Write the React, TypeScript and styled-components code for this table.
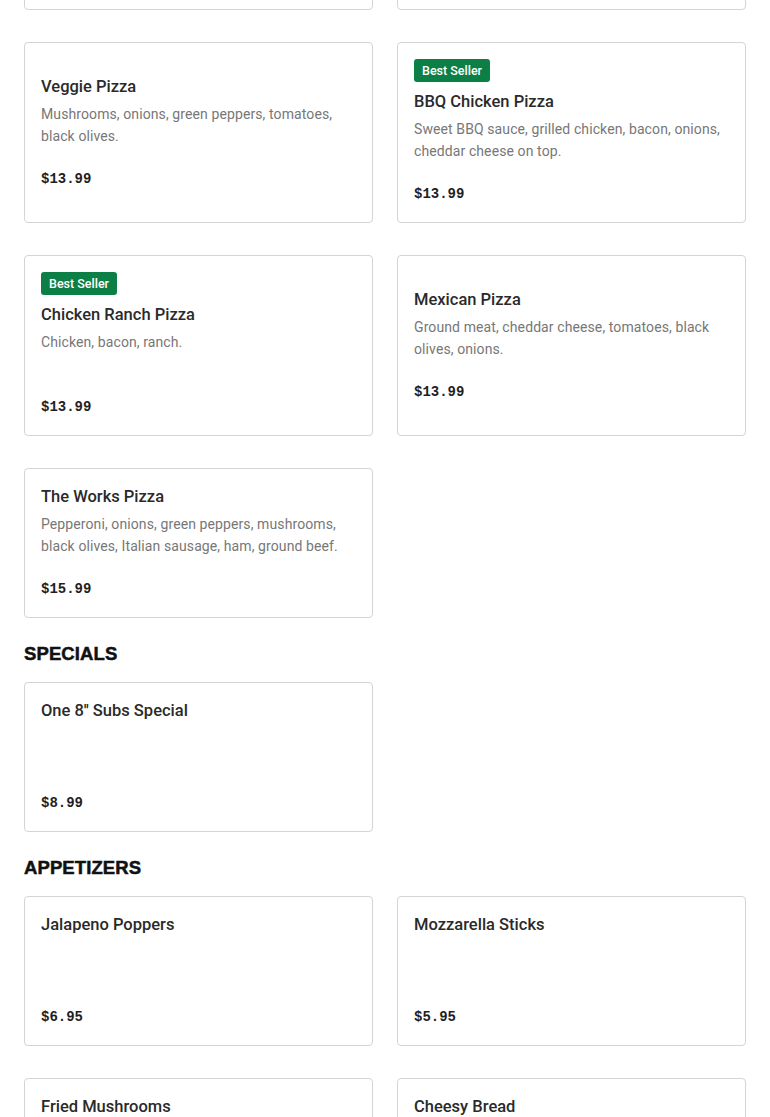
import React from "react";
import styled, { createGlobalStyle } from "styled-components";

const GlobalStyle = createGlobalStyle`
  html, body {
    margin: 0;
    padding: 0;
    background: #fff;
    overflow: hidden;
  }
  * {
    box-sizing: border-box;
  }
`;

interface Item {
  name: string;
  description?: string;
  price: string;
  bestSeller?: boolean;
}

interface Section {
  title?: string;
  items: Item[];
}

const sections: Section[] = [
  {
    items: [
      {
        name: "Cheese Pizza",
        description: "Our classic sauce with a blend of mozzarella cheese.",
        price: "$11.99",
      },
      {
        name: "Pepperoni Pizza",
        description: "Loaded with pepperoni and mozzarella cheese.",
        price: "$12.99",
      },
      {
        name: "Veggie Pizza",
        description: "Mushrooms, onions, green peppers, tomatoes, black olives.",
        price: "$13.99",
      },
      {
        name: "BBQ Chicken Pizza",
        description:
          "Sweet BBQ sauce, grilled chicken, bacon, onions, cheddar cheese on top.",
        price: "$13.99",
        bestSeller: true,
      },
      {
        name: "Chicken Ranch Pizza",
        description: "Chicken, bacon, ranch.",
        price: "$13.99",
        bestSeller: true,
      },
      {
        name: "Mexican Pizza",
        description: "Ground meat, cheddar cheese, tomatoes, black olives, onions.",
        price: "$13.99",
      },
      {
        name: "The Works Pizza",
        description:
          "Pepperoni, onions, green peppers, mushrooms, black olives, Italian sausage, ham, ground beef.",
        price: "$15.99",
      },
    ],
  },
  {
    title: "SPECIALS",
    items: [{ name: "One 8'' Subs Special", price: "$8.99" }],
  },
  {
    title: "APPETIZERS",
    items: [
      { name: "Jalapeno Poppers", price: "$6.95" },
      { name: "Mozzarella Sticks", price: "$5.95" },
      { name: "Fried Mushrooms", price: "$5.95" },
      { name: "Cheesy Bread", price: "$6.95" },
    ],
  },
];

const Page = styled.main`
  padding: 0 24px;
  margin-top: -140px;
`;

const SectionHeading = styled.h2`
  margin: 24px 0 16px;
  font-family: "Liberation Sans", Arial, sans-serif;
  font-weight: 700;
  font-size: 18.5px;
  line-height: 24px;
  letter-spacing: 0.1px;
  color: #111;
  -webkit-text-stroke: 0.5px #111;
`;

const Grid = styled.div`
  display: grid;
  grid-template-columns: 1fr 1fr;
  column-gap: 24px;
  row-gap: 32px;
`;

const Card = styled.div`
  display: flex;
  flex-direction: column;
  justify-content: center;
  min-height: 150px;
  padding: 16px;
  border: 1px solid #d4d4d4;
  border-radius: 4px;
  background: #fff;
`;

const Badge = styled.span`
  align-self: flex-start;
  height: 23px;
  padding: 0 8px;
  margin-bottom: 8px;
  border-radius: 3px;
  background: #0b7f45;
  color: #fff;
  font-family: Roboto, "Liberation Sans", sans-serif;
  font-weight: 500;
  font-size: 12.5px;
  line-height: 23px;
`;

const Title = styled.div`
  font-family: Roboto, "Liberation Sans", sans-serif;
  font-weight: 500;
  font-size: 16.5px;
  line-height: 24px;
  color: #2a2a2a;
`;

const Description = styled.div`
  margin-top: 4px;
  min-height: 44px;
  font-family: Roboto, "Liberation Sans", sans-serif;
  font-size: 14px;
  line-height: 22px;
  letter-spacing: 0.1px;
  color: #777;
`;

const Price = styled.div`
  margin-top: 20px;
  font-family: "Liberation Mono", "DejaVu Sans Mono", monospace;
  font-weight: 700;
  font-size: 14px;
  line-height: 24px;
  color: #1f1f1f;
`;

const MenuCard: React.FC<{ item: Item }> = ({ item }) => (
  <Card>
    {item.bestSeller && <Badge>Best Seller</Badge>}
    <Title>{item.name}</Title>
    <Description>{item.description}</Description>
    <Price>{item.price}</Price>
  </Card>
);

export default function App() {
  return (
    <>
      <GlobalStyle />
      <Page>
        {sections.map((section, i) => (
          <section key={i}>
            {section.title && <SectionHeading>{section.title}</SectionHeading>}
            <Grid>
              {section.items.map(item => (
                <MenuCard key={item.name} item={item} />
              ))}
            </Grid>
          </section>
        ))}
      </Page>
    </>
  );
}
